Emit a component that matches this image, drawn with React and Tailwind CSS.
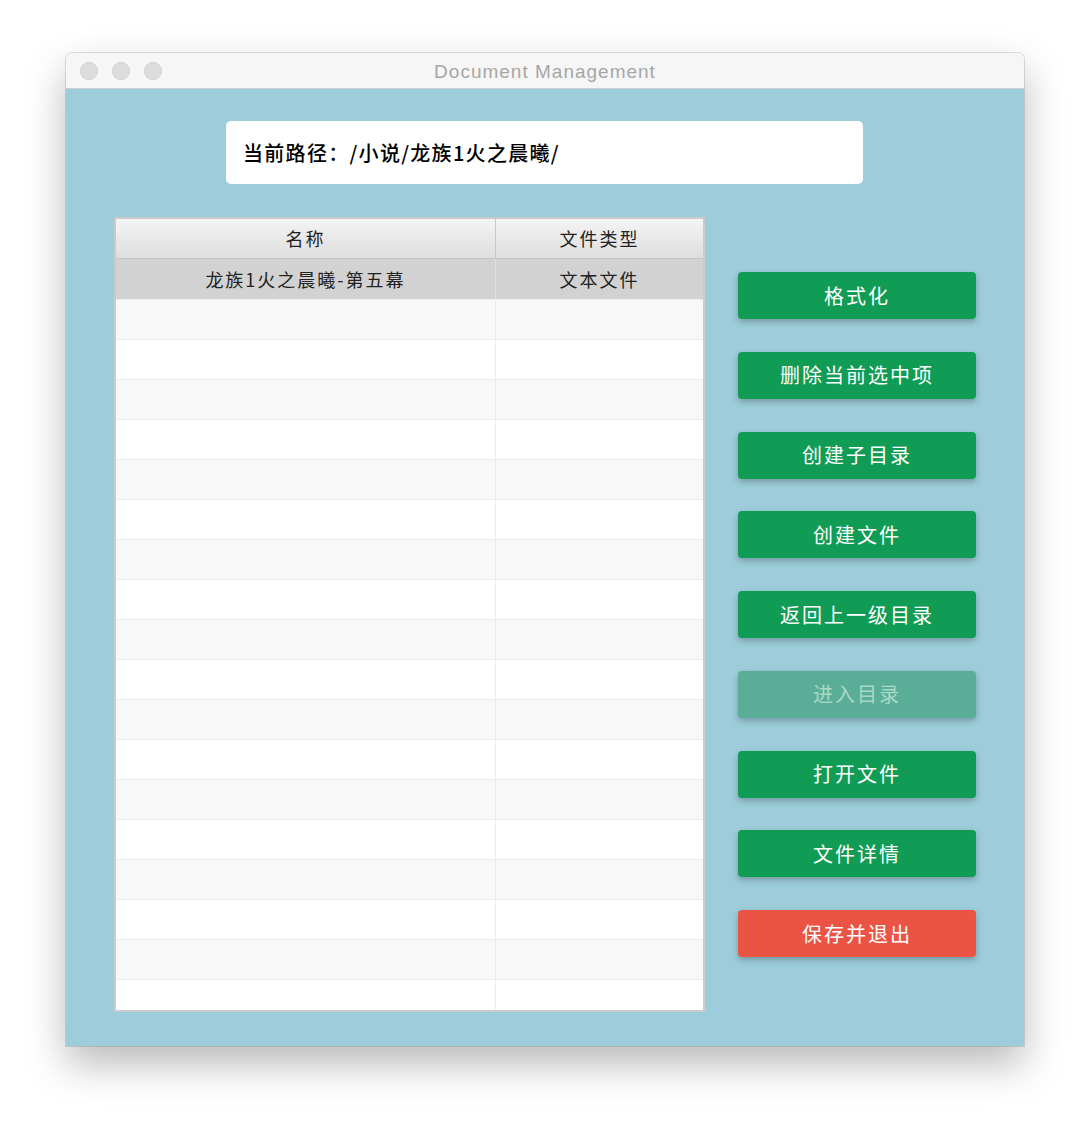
import React from "react";

const buttons = [
  { label: "格式化", kind: "green" },
  { label: "删除当前选中项", kind: "green" },
  { label: "创建子目录", kind: "green" },
  { label: "创建文件", kind: "green" },
  { label: "返回上一级目录", kind: "green" },
  { label: "进入目录", kind: "disabled" },
  { label: "打开文件", kind: "green" },
  { label: "文件详情", kind: "green" },
  { label: "保存并退出", kind: "red" },
];

const font = { fontFamily: '"Noto Sans CJK SC", "Noto Sans", sans-serif' };

export default function App() {
  const rows = Array.from({ length: 18 });
  return (
    <div className="w-[1090px] h-[1125px] bg-white pt-[53px] pl-[66px]" style={font}>
      <div className="w-[958px] rounded-t-[6px] overflow-hidden shadow-[0_18px_40px_rgba(0,0,0,0.28),0_0_0_1px_rgba(0,0,0,0.12)]">
        {/* title bar */}
        <div className="relative h-[36px] bg-[#f6f6f6] border-b border-[#cfcfcf] flex items-center justify-center">
          <div className="absolute left-[14px] top-[9px] flex gap-[14px]">
            <div className="w-[18px] h-[18px] rounded-full bg-[#dcdcdc] border border-[#d0d0d0]" />
            <div className="w-[18px] h-[18px] rounded-full bg-[#dcdcdc] border border-[#d0d0d0]" />
            <div className="w-[18px] h-[18px] rounded-full bg-[#dcdcdc] border border-[#d0d0d0]" />
          </div>
          <span
            className="text-[19px] tracking-[1px] text-[#a6a6a6] pt-[3px]"
            style={{ fontFamily: '"Liberation Sans", sans-serif' }}
          >
            Document Management
          </span>
        </div>
        {/* content */}
        <div className="h-[957px] bg-[#9dcdda] pt-[32px]">
          <div className="ml-[160px] w-[637px] h-[63px] bg-white rounded-[5px] flex items-center pl-[17px] text-[20px] tracking-[1.3px] text-black font-medium">
            当前路径：/小说/龙族1火之晨曦/
          </div>
          <div className="flex mt-[33px]">
            {/* table */}
            <div className="ml-[48px] w-[591px] h-[795px] border-2 border-[#cbcbcb] bg-white overflow-hidden flex flex-col">
              <div className="flex shrink-0 h-[40px] bg-gradient-to-b from-[#f4f4f4] to-[#dedede] border-b border-[#c4c4c4] text-[18px] tracking-[2px] text-[#222]">
                <div className="w-[380px] flex items-center justify-center border-r border-[#c8c8c8]">名称</div>
                <div className="flex-1 flex items-center justify-center">文件类型</div>
              </div>
              <div className="flex shrink-0 h-[40px] bg-[#d2d2d2] text-[18px] tracking-[2px] text-[#222]">
                <div className="w-[380px] flex items-center justify-center border-r border-[#e0e0e0]">龙族1火之晨曦-第五幕</div>
                <div className="flex-1 flex items-center justify-center">文本文件</div>
              </div>
              {rows.map((_, i) => (
                <div
                  key={i}
                  className={`flex h-[40px] shrink-0 border-t border-[#ececec] ${i % 2 === 0 ? "bg-[#f8f8f8]" : "bg-white"}`}
                >
                  <div className="w-[380px] border-r border-[#ececec]" />
                  <div className="flex-1" />
                </div>
              ))}
            </div>
            {/* buttons */}
            <div className="ml-[33px] mt-[55px] flex flex-col gap-[32.75px]">
              {buttons.map((b) => (
                <div
                  key={b.label}
                  className={`w-[238px] h-[47px] rounded-[4px] flex items-center justify-center text-[20px] tracking-[2px] shadow-[0_3px_6px_rgba(0,0,0,0.25)] ${
                    b.kind === "green"
                      ? "bg-[#119c55] text-white"
                      : b.kind === "red"
                      ? "bg-[#eb5445] text-white"
                      : "bg-[#5aae98] text-[#a9d8c6]"
                  }`}
                >
                  {b.label}
                </div>
              ))}
            </div>
          </div>
        </div>
      </div>
    </div>
  );
}
